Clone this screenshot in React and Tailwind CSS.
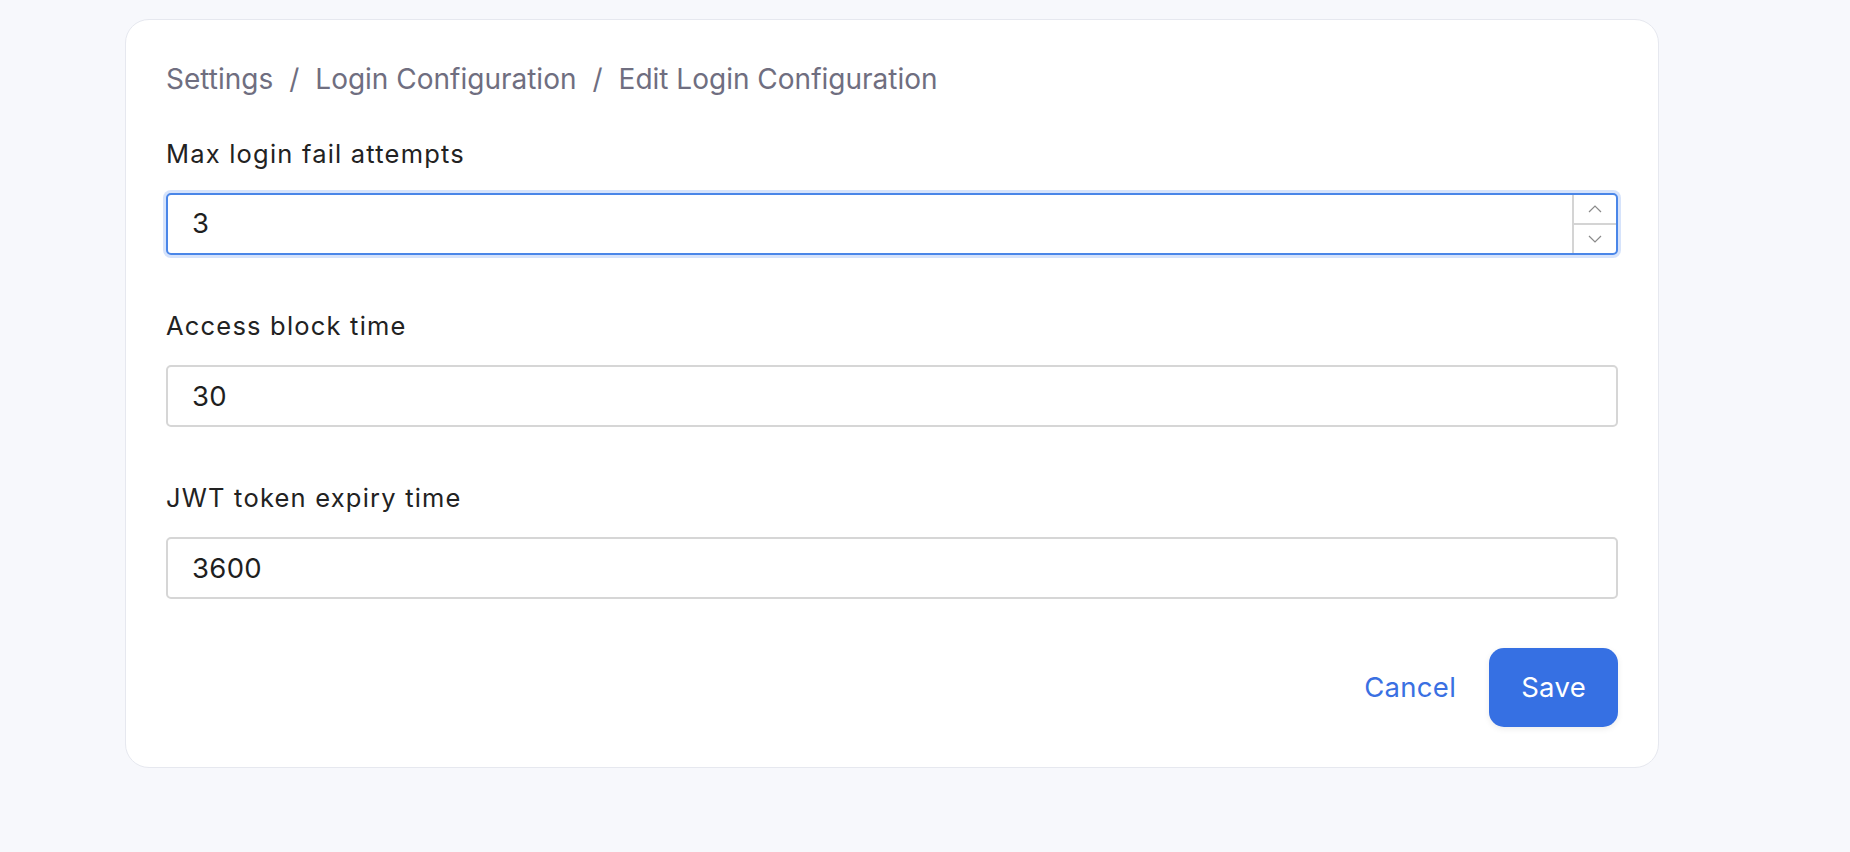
import React from "react";

function Chevron({ up }) {
  return (
    <svg width="14" height="8" viewBox="0 0 14 8" fill="none">
      <path
        d={up ? "M1 7L7 1L13 7" : "M1 1L7 7L13 1"}
        stroke="#8a8a8a"
        strokeWidth="1.2"
      />
    </svg>
  );
}

function Field({ label, value, focused, className }) {
  return (
    <div className={className}>
      <label className="block text-[25.5px] leading-[30px] tracking-[1.2px] text-[#222222]">
        {label}
      </label>
      {focused ? (
        <div className="mt-[24px] flex h-[62px] rounded-[5px] border-2 border-[#4a86e8] bg-white shadow-[0_0_0_3px_#d6e3fb]">
          <input
            className="min-w-0 flex-1 bg-transparent pl-[24px] text-[27.5px] tracking-[0.3px] text-[#1f1f1f] outline-none"
            defaultValue={value}
          />
          <div className="flex w-[44px] flex-col border-l-2 border-[#d4d4d4]">
            <div className="flex flex-1 items-center justify-center border-b-2 border-[#d4d4d4]">
              <Chevron up />
            </div>
            <div className="flex flex-1 items-center justify-center">
              <Chevron />
            </div>
          </div>
        </div>
      ) : (
        <input
          className="mt-[24px] block h-[62px] w-full rounded-[5px] border-2 border-[#d6d6d6] bg-white pl-[24px] text-[27.5px] tracking-[0.3px] text-[#1f1f1f] outline-none"
          defaultValue={value}
        />
      )}
    </div>
  );
}

export default function App() {
  return (
    <div className="min-h-screen bg-[#f7f8fc] pl-[125px] pt-[19px] font-['Inter',sans-serif]">
      <div className="w-[1534px] rounded-[24px] border border-[#e6e8ef] bg-white px-10 pb-10 pt-[41px]">
        <nav className="flex items-center gap-[16px] text-[28px] leading-[36px] text-[#6f6e80]">
          <span>Settings</span>
          <span>/</span>
          <span>Login Configuration</span>
          <span>/</span>
          <span>Edit Login Configuration</span>
        </nav>

        <Field
          className="mt-[42px]"
          label="Max login fail attempts"
          value="3"
          focused
        />
        <Field className="mt-[56px]" label="Access block time" value="30" />
        <Field className="mt-[56px]" label="JWT token expiry time" value="3600" />

        <div className="mt-[49px] flex items-center justify-end gap-[33px]">
          <button className="text-[27.5px] tracking-[0.3px] text-[#3a70e2]">Cancel</button>
          <button className="h-[79px] rounded-[15px] bg-[#3670e3] px-[32px] text-[27.5px] tracking-[0.3px] text-white shadow-[0_2px_6px_rgba(0,0,0,0.08)]">
            Save
          </button>
        </div>
      </div>
    </div>
  );
}
